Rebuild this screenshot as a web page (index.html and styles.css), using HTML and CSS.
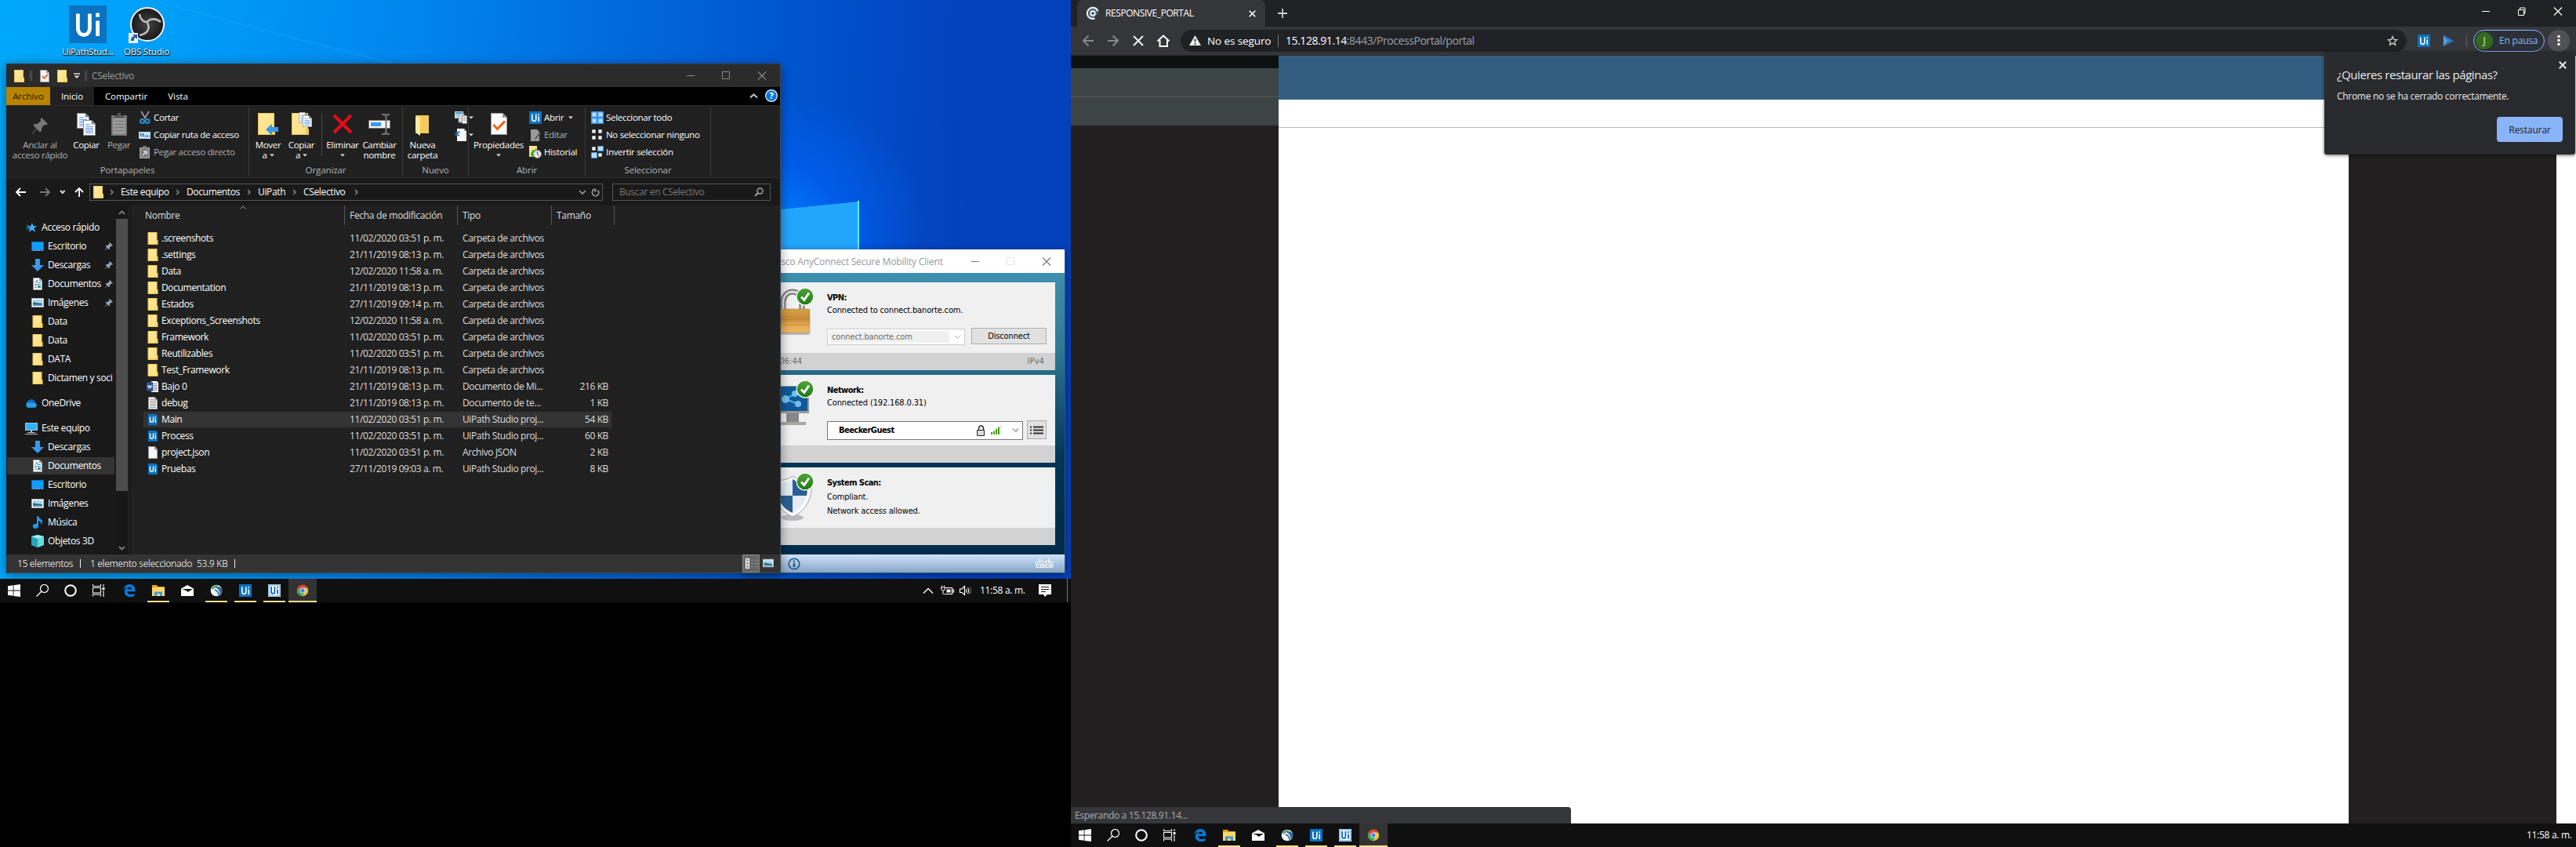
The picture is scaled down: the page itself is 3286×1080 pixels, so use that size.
FILE: index.html
```html
<!DOCTYPE html>
<html lang="es">
<head>
<meta charset="utf-8">
<title>Escritorio</title>
<link rel="stylesheet" href="styles.css">
</head>
<body>
<svg class="defs" width="0" height="0">
  <defs>
    <linearGradient id="gFolder" x1="0" y1="0" x2="1" y2="1"><stop offset="0" stop-color="#ffe9a2"/><stop offset="1" stop-color="#ffdf80"/></linearGradient>
    <linearGradient id="gGreen" x1="0" y1="0" x2="0" y2="1"><stop offset="0" stop-color="#4fa53a"/><stop offset="1" stop-color="#1d7a12"/></linearGradient>
    <linearGradient id="gGold" x1="0" y1="0" x2="0" y2="1"><stop offset="0" stop-color="#d9a04a"/><stop offset=".45" stop-color="#c98f3c"/><stop offset=".55" stop-color="#dba24c"/><stop offset="1" stop-color="#f2bb66"/></linearGradient>
    <radialGradient id="gObs"><stop offset="0" stop-color="#444"/><stop offset="1" stop-color="#1a181a"/></radialGradient>
    <symbol id="folder" viewBox="0 0 13 16"><path d="M0 0h12v10h1v6H0z" fill="#f0c84c"/><path d="M1 1h10v10h-1v4H1z" fill="url(#gFolder)"/><path d="M11 11h1v4h-1z" fill="#fff0b8"/></symbol>
    <symbol id="bigfolder" viewBox="0 0 22 28"><path d="M0 0h21v20h1v8H0z" fill="#efc653"/><path d="M1 1h19v19h-2v7H1z" fill="url(#gFolder)"/></symbol>
    <symbol id="page" viewBox="0 0 12 16"><path d="M0 0h8.5L12 3.500V16H0z" fill="#999"/><path d="M1 1h7v3.500h3V15H1z" fill="#f7f7f7"/></symbol>
    <symbol id="text" viewBox="0 0 12 16"><path d="M0 0h8.500L12 3.500V16H0z" fill="#999"/><path d="M1 1h7v3.500h3V15H1z" fill="#f7f7f7"/><path d="M2 3.500h5M2 5.500h8M2 7.500h8M2 9.500h8M2 11.500h8M2 13.500h8" stroke="#9a9a9a"/></symbol>
    <symbol id="doc" viewBox="0 0 12 16"><path d="M0 0h8.500L12 3.500V16H0z" fill="#999"/><path d="M1 1h7v3.500h3V15H1z" fill="#fff"/><path d="M3 7l2-4 1.500 4M7 6.500h3M2 8.500h8" stroke="#2a8fd8" fill="none"/><path d="M2 10.500h3M2 12.500h3" stroke="#888"/><path d="M6 10h4v3H6z" fill="#3b8f86"/></symbol>
    <symbol id="sheet" viewBox="0 0 16 20"><path d="M0 0h11l5 5v15H0z" fill="#8d8d8d"/><path d="M1 1h9.500v4.500H15V19H1z" fill="#fff"/><path d="M3 5.500h6M3 8.500h10M3 10.500h10M3 12.500h10M3 14.500h10M3 16.500h10" stroke="#5b9bf0"/></symbol>
    <symbol id="desk" viewBox="0 0 16 12"><path d="M0 0h16v12H0z" fill="#0a6cc8"/><path d="M1 1h14v9H1z" fill="#109df5"/><path d="M2 11h1M4 11h8M13 11h2" stroke="#fff" stroke-dasharray="1 1"/></symbol>
    <symbol id="down" viewBox="0 0 16 16"><path d="M5 0h6v8h5l-8 8-8-8h5z" fill="#3a97ea"/></symbol>
    <symbol id="img" viewBox="0 0 16 12"><path d="M0 0h16v12H0z" fill="#aaa"/><path d="M1 1h14v10H1z" fill="#fff"/><path d="M2 2h12v8H2z" fill="#a9d4f7"/><path d="M2 5l4 1 8 1v3H2z" fill="#2b6f78"/><path d="M2 8h12v2H2z" fill="#4b8fca"/></symbol>
    <symbol id="cloud" viewBox="0 0 16 11"><path d="M4 10a4 4 0 0 1-1-7 5.500 5.500 0 0 1 9-1l2 3-8 6z" fill="#0f6cc4"/><path d="M3 10.800a3.600 3.600 0 0 1 1-6.500l9 1a3 3 0 0 1 0 5.500z" fill="#28a0e8"/></symbol>
    <symbol id="pc" viewBox="0 0 16 15"><path d="M0 0h16v10H0z" fill="#8fc7e8"/><path d="M1 1h14v8H1z" fill="#38aef5"/><path d="M7 10h2v2h4v1H3v-1h4zM0 14h16v1H0z" fill="#b9c4cc"/></symbol>
    <symbol id="note" viewBox="0 0 12 16"><path d="M5 0h2c0 3 5 4 5 7 0 2-1 3-2 4 1-3-1-4-3-5v7a3.600 3.200 0 1 1-2-3z" fill="#1a9bf0"/></symbol>
    <symbol id="cube" viewBox="0 0 16 16"><path d="M8 0l8 2v11l-8 3-8-3V2z" fill="#2fb4c4"/><path d="M8 5l8-3v11l-8 3z" fill="#67d7e2"/><path d="M0 2l8-2 8 2-8 3z" fill="#a5edf2"/><path d="M0 2l8 3v11l-8-3z" fill="#27a5b8"/></symbol>
    <symbol id="star" viewBox="0 0 14 12"><path d="M8 0l1.400 4H14l-3.500 2.800L12 12 8 9l-4 3 1-4.500L1.500 4.500H6z" fill="#39aef5"/><path d="M0 6.500h4M1 8.500h3M1 3.500h3" stroke="#1a7dc8"/></symbol>
    <symbol id="pin" viewBox="0 0 10 10"><path d="M6 0l4 4-1 .8-1-.3L6 6.500 6 8.500l-1 .8-2-2L.5 10H0v-.5L2.500 7 .7 5l.8-1 2 0 2-2L5.200 1z" fill="#98a3ad"/></symbol>
    <symbol id="word" viewBox="0 0 16 14"><path d="M6 0h7l2 2v12H6z" fill="#fff"/><path d="M8 3.500h5M8 5.500h6M8 7.500h6M8 9.500h6M8 11.500h6" stroke="#888"/><path d="M0 2l8-1v12l-8-1z" fill="#2a5699"/><path d="M1.500 5l1.200 4L4 5.500 5.300 9l1.200-4" fill="none" stroke="#fff"/></symbol>
    <symbol id="ui" viewBox="0 0 16 16"><path d="M0 0h16v16H0z" fill="#0b72c0"/><path d="M3.800 3.500v6c0 4 5 4 5 0v-6M12.200 6.500v6.500" fill="none" stroke="#fff" stroke-width="1.600"/><path d="M11.400 3.200H13v1.700h-1.600z" fill="#fff"/></symbol>
    <symbol id="uiw" viewBox="0 0 16 16"><path d="M0 0h16v16H0z" fill="#fff"/><path d="M1 1h14v14H1z" fill="none" stroke="#0b72c0" stroke-width=".8"/><path d="M4 3v6.500c0 3.200 4.400 3.200 4.400 0V3M12 6.500v6" fill="none" stroke="#0b72c0" stroke-width="1.900"/><path d="M11 3h2v2h-2z" fill="#0b72c0"/></symbol>
    <symbol id="uifile" viewBox="0 0 12 14"><path d="M0 0h10l2 2v12H0z" fill="#0b72c0"/><path d="M2.500 3.500v4.500c0 3 4 3 4 0V3.500M9.300 6v5" fill="none" stroke="#fff" stroke-width="1.400"/><path d="M8.500 3.300h1.600v1.500H8.500z" fill="#fff"/></symbol>
    <symbol id="chevr" viewBox="0 0 5 8"><path d="M1 1l3 3-3 3" fill="none" stroke="#8a8a8a" stroke-width="1.500"/></symbol>
    <symbol id="dd" viewBox="0 0 6 4"><path d="M0 .5h6L3 3.500z" fill="#ddd"/></symbol>
    <symbol id="ok" viewBox="0 0 24 24"><circle cx="12" cy="12" r="11.500" fill="#fff"/><circle cx="12" cy="12" r="10.300" fill="url(#gGreen)"/><path d="M7 12.500l3.800 4L17 7.500" fill="none" stroke="#fff" stroke-width="3"/></symbol>
    <symbol id="win" viewBox="0 0 16 16"><path d="M0 2.300L6.700 1.300V7.600H0zM7.500 1.200L16 0V7.600H7.500zM0 8.400H6.700V14.800L0 13.800zM7.500 8.400H16V16L7.500 14.900z" fill="#fff"/></symbol>
    <symbol id="lens" viewBox="0 0 16 16"><circle cx="10.500" cy="5.500" r="5" fill="none" stroke="#fff" stroke-width="1.200"/><path d="M7 9L.5 15.500" stroke="#fff" stroke-width="1.200"/></symbol>
    <symbol id="ring" viewBox="0 0 16 16"><circle cx="8" cy="8" r="6.800" fill="none" stroke="#fff" stroke-width="2"/></symbol>
    <symbol id="tview" viewBox="0 0 16 16"><path d="M.5 0v2.500h10V0M.5 15.500V13h10v2.500M.5 4.500h10v6.500H.5zM14 0v3M14 8v8" fill="none" stroke="#fff" stroke-width="1.100"/><path d="M12.500 4h3v3h-3z" fill="#fff"/></symbol>
    <symbol id="edge" viewBox="0 0 16 16"><path d="M0 7C1 2.500 4.500 0 8.300 0 13 0 15.500 3.500 15.500 7.300V9.300H5.300c.2 4 5.500 4.700 9.200 2.400v3.200C9 17.500 1.800 16 1.800 9.800c0-3 1.500-5 4-6.300C3.500 3.500 1.500 4.800 0 7zM5.500 6.300h5.300c0-4-4.900-3.700-5.300 0z" fill="#0a78d7"/></symbol>
    <symbol id="fexp" viewBox="0 0 16 14"><path d="M0 0h6l1.500 2H16v12H0z" fill="#e9a400"/><path d="M0 3h16v11H0z" fill="#ffd869"/><path d="M3 14V8.500h10V14h-3v-3H6v3z" fill="#3a96dd"/></symbol>
    <symbol id="mail" viewBox="0 0 16 14"><path d="M8 0l8 4.500V14H0V4.500z" fill="#fff"/><path d="M1 5h14L8.500 9 7 7.200z" fill="#101010"/></symbol>
    <symbol id="any" viewBox="0 0 16 16"><circle cx="8" cy="8" r="7.300" fill="#eef3f5"/><path d="M1.500 5.500A7.300 7.300 0 0 1 12 2C8 2 5 4 4.500 7z" fill="#6fae7d"/><path d="M3 5c5-2.500 9 1 9.500 8.500A7.300 7.300 0 0 0 14.500 5C11 2 6 2 3 5z" fill="#2c6f9e"/><path d="M6 7c3 1 5 4 5.500 8" fill="none" stroke="#1d5a88" stroke-width="1.400"/></symbol>
    <symbol id="chrome" viewBox="0 0 16 16"><circle cx="8" cy="8" r="7.200" fill="#f2c42c"/><path d="M1.800 4.400A7.200 7.200 0 0 1 14.300 4.500H8L5 9.800z" fill="#e04436"/><path d="M1.800 4.400A7.200 7.200 0 0 0 7.400 15.200L11 9.800H5z" fill="#3aa757"/><circle cx="8" cy="8" r="3.500" fill="#fff"/><circle cx="8" cy="8" r="2.700" fill="#4285f4"/></symbol>
  </defs>
</svg>

<div class="screens">
<section class="left">
  <div class="desktop">
    <svg class="rays" width="1366" height="738"><path d="M190 0L500 81" stroke="#1fa6fb" stroke-width="2" opacity=".4"/><path d="M995 267l100-10v63H995z" fill="#22a6fb"/><path d="M1095 256v63" stroke="#5cecff" stroke-width="2"/></svg>
    <div class="shortcut s1"><svg width="48" height="48"><use href="#ui"/></svg><span>UiPathStud...</span></div>
    <div class="shortcut s2">
      <svg width="48" height="48" viewBox="0 0 48 48"><circle cx="25" cy="24" r="21" fill="url(#gObs)" stroke="#f2f2f2" stroke-width="2"/><g fill="none" stroke="#bcbcbc" stroke-width="2.600"><path d="M15 11c1 7 5 10 9 10"/><path d="M24 22c4-6 12-6 18-1"/><path d="M25 22c4 8 0 14-10 16"/></g><path d="M1 35h12v13H1z" fill="#f2f2f2"/><path d="M4 45c0-4 1-5 4-6l-2-2h6v6l-2-2c-2 0-2 2-2 4z" fill="#2a5ba8"/></svg>
      <span>OBS Studio</span></div>

    <div class="cisco">
      <div class="c-title"><span>Cisco AnyConnect Secure Mobility Client</span>
        <svg width="102" height="11"><path d="M0 5.500h10" stroke="#777"/><path d="M45.500.5h9v9h-9z" fill="none" stroke="#e2e2e2"/><path d="M91 .5l10 10M101 .5l-10 10" stroke="#777" stroke-width="1.100"/></svg></div>
      <div class="c-body">
        <div class="panel">
          <div class="p-main">
            <svg class="p-ico" width="62" height="72"><path d="M19 36V25a12 13 0 0 1 24 0v11" fill="none" stroke="#777" stroke-width="7"/><path d="M19 36V25a12 13 0 0 1 24 0v11" fill="none" stroke="#ddd" stroke-width="3"/><rect x="4" y="64" width="49" height="3" rx="1" fill="#bbb"/><rect x="3" y="34" width="50" height="30" rx="1" fill="url(#gGold)" stroke="#a9772c" stroke-width=".5"/><path d="M4 44h48M4 47h48M4 50h48M4 54h48" stroke="#b57e30" opacity=".6"/><use href="#ok" x="35" y="6" width="24" height="24"/></svg>
            <div class="p-info"><b>VPN:</b><span>Connected to connect.banorte.com.</span>
              <div class="ctl"><div class="combo off"><span>connect.banorte.com</span><svg width="9" height="6"><path d="M.5.5l4 4 4-4" fill="none" stroke="#aaa"/></svg></div><div class="btn">Disconnect</div></div></div>
          </div>
          <div class="p-foot"><span>00:06:44</span><span>IPv4</span></div>
        </div>
        <div class="panel">
          <div class="p-main">
            <svg class="p-ico" width="62" height="72"><path d="M0 13h52v36H0z" fill="#999"/><path d="M0 12h52v2H0z" fill="#eee"/><path d="M0 15h50v31H0z" fill="#10599a"/><path d="M34 24L22 31l16 6" fill="none" stroke="#5bb2e8" stroke-width="2"/><circle cx="22" cy="31" r="5" fill="#6fc0f0"/><circle cx="34" cy="24" r="4" fill="#6fc0f0"/><circle cx="38" cy="37" r="4" fill="#6fc0f0"/><path d="M23 49h16v11H23z" fill="#888"/><path d="M10 60h38v4H10z" fill="#a8a8a4"/><use href="#ok" x="35" y="6" width="24" height="24"/></svg>
            <div class="p-info"><b>Network:</b><span>Connected (192.168.0.31)</span>
              <div class="ctl net"><div class="combo on"><b>BeeckerGuest</b>
                <svg width="54" height="14"><path d="M2.500 6V4a3 3 0 0 1 6 0v2" fill="none" stroke="#333" stroke-width="1.500"/><path d="M.5 6.500h9v7h-9z" fill="#ddd" stroke="#222"/><path d="M18 12V9h2v3zM21 12V7.500h2V12zM24 12V5h2v7zM27 12V2.500h2V12z" fill="#4a9a12"/><path d="M30 12V0h1.500v12z" fill="#ddd"/><path d="M46 4.500l3.700 3.700 3.700-3.700" fill="none" stroke="#444"/></svg></div>
                <div class="btn list"><svg width="17" height="11"><path d="M0 1.500h2M0 5.500h2M0 9.500h2M4 1.500h13M4 5.500h13M4 9.500h13" stroke="#333" stroke-width="2"/></svg></div></div></div>
          </div>
          <div class="p-foot"></div>
        </div>
        <div class="panel last">
          <div class="p-main">
            <svg class="p-ico" width="62" height="72"><ellipse cx="31" cy="64" rx="14" ry="4" fill="#bbb"/><path d="M31 11q11 8 24 4c2 24-6 40-24 48C13 55 5 39 7 15q13 4 24-4z" fill="#fbfbfb" stroke="#9aa0a6"/><path d="M31 15q9 6 19 4c1 20-5 32-19 39z" fill="#e4ebf3"/><path d="M31 15q-9 6-19 4c0 7 0 12 1 17h18z" fill="#e4ebf3"/><path d="M31 15q9 6 19 4c0 7 0 12-1 17H31zM31 36v22c-11-5-16-12-18-22z" fill="#2b5f93"/><use href="#ok" x="35" y="6" width="24" height="24"/></svg>
            <div class="p-info wide"><b>System Scan:</b><span>Compliant.</span><span>Network access allowed.</span></div>
          </div>
          <div class="p-foot"></div>
        </div>
      </div>
      <div class="c-foot"><svg width="16" height="16"><circle cx="8" cy="8" r="6.800" fill="none" stroke="#1b5a85" stroke-width="1.600"/><path d="M8 7v5M8 3.800v2" stroke="#1b5a85" stroke-width="2.400"/></svg>
        <div class="logo"><svg width="24" height="7"><path d="M.7 4v2M3.500 3v3M6.300 0v6M9.100 2v4M12 4v2M14.800 2v4M17.600 0v6M20.400 3v3M23.300 4v2" stroke="#fff" stroke-width="1.300"/></svg><span>CISCO</span></div></div>
    </div>

    <div class="explorer">
      <div class="e-title">
        <svg width="13" height="16"><use href="#folder"/></svg><i class="vsep a"></i>
        <svg class="m1" width="12" height="16"><use href="#page"/><path d="M3 8l2.500 3L10 6" stroke="#e8591a" stroke-width="1.800" fill="none"/></svg>
        <svg class="m2" width="13" height="16"><use href="#folder"/></svg>
        <svg class="m3" width="8" height="8"><path d="M0 1h8" stroke="#ddd" stroke-width="1.500"/><path d="M.5 3.500h7L4 7z" fill="#ddd"/></svg><i class="vsep b"></i>
        <span>CSelectivo</span>
        <svg class="winbtns" width="102" height="11"><path d="M0 5.500h10M45.500.5h9v9h-9z" fill="none" stroke="#888"/><path d="M91 .5l10 10M101 .5l-10 10" stroke="#888" stroke-width="1.100"/></svg>
      </div>
      <div class="tabs"><span class="t file">Archivo</span><span class="t home">Inicio</span><span class="t share">Compartir</span><span class="t view">Vista</span>
        <svg class="help" width="36" height="16"><path d="M1 10.500l4.500-4 4.500 4" fill="none" stroke="#bbb" stroke-width="2.200"/><circle cx="28" cy="8" r="7.400" fill="#0b79d8" stroke="#e8f2fa" stroke-width="1.200"/><text x="28" y="12" text-anchor="middle" class="q">?</text></svg></div>
      <div class="ribbon">
        <div class="group g1">
          <div class="tools">
            <div class="big dim b1"><svg width="22" height="30" viewBox="0 0 22 30"><path d="M13 6l8 8-2 1.500-2-.5-4 4v4l-2 1.500-4-4L1 27l-.5-.5L6.500 20l-4-4L4 14h4l4-4-.5-2z" fill="#777"/></svg><span>Anclar al<br>acceso rápido</span></div>
            <div class="big b2"><svg width="24" height="30"><use href="#sheet" x="0" y="0" width="16" height="20"/><use href="#sheet" x="8" y="9" width="16" height="20"/></svg><span>Copiar</span></div>
            <div class="big dim b3"><svg width="20" height="30"><path d="M0 3h20v26H0z" fill="#777"/><path d="M2 7h16v20H2z" fill="#999"/><path d="M4 10.500h12M4 14.500h12M4 18.500h12M4 22.500h12" stroke="#777"/><path d="M4 6V3h4V0h4v3h4v3z" fill="#555"/></svg><span>Pegar</span></div>
            <div class="stack">
              <div><svg width="16" height="16"><path d="M3 0l5.500 9M13 0L7.500 9" stroke="#aaa" stroke-width="1.500"/><circle cx="4.500" cy="12.500" r="2.500" fill="none" stroke="#2a8dd0" stroke-width="2"/><circle cx="11" cy="12.500" r="2.500" fill="none" stroke="#2a8dd0" stroke-width="2"/></svg>Cortar</div>
              <div><svg width="16" height="16"><path d="M0 4h15v9H0z" fill="#b9e0fa"/><path d="M2 6l1.500 4M5 6l1.500 4M8 9.500h1.500M10.500 9.500H12M13 9.500h1" stroke="#123"/></svg>Copiar ruta de acceso</div>
              <div class="dim"><svg width="16" height="16"><path d="M1 2h13v14H1z" fill="#999"/><path d="M3 4h9v10H3z" fill="#777"/><path d="M5 0h5v3H5z" fill="#777"/><path d="M5 12l4-4M6 7h4v4" stroke="#ddd" fill="none" stroke-width="1.500"/></svg>Pegar acceso directo</div>
            </div>
          </div><div class="glabel">Portapapeles</div>
        </div>
        <div class="group g2">
          <div class="tools">
            <div class="big b4"><svg width="28" height="30"><use href="#bigfolder" x="1" y="0" width="22" height="28"/><path d="M11 21l8-7v4h8v6h-8v5z" fill="#3a97ea"/></svg><span>Mover<br>a<svg width="6" height="4"><use href="#dd"/></svg></span></div>
            <div class="big b5"><svg width="28" height="30"><use href="#bigfolder" x="1" y="0" width="22" height="28"/><use href="#sheet" x="10" y="-1" width="12" height="14"/><use href="#sheet" x="15" y="3" width="12" height="15"/></svg><span>Copiar<br>a<svg width="6" height="4"><use href="#dd"/></svg></span></div>
            <i class="inner"></i>
            <div class="big b6"><svg width="24" height="30"><path d="M1 3l22 22M23 3L1 25" stroke="#e60b17" stroke-width="4"/></svg><span>Eliminar<br><svg class="solo" width="6" height="4"><use href="#dd"/></svg></span></div>
            <div class="big b7"><svg width="28" height="30"><path d="M.5 9.500h27v10H.5z" fill="#f4f4f4" stroke="#777"/><path d="M3 12h13v5H3z" fill="#3a97ea"/><path d="M17 2h4l1.500 2L24 2h3M22.500 3v23M17 27h4l1.500-2 1.500 2h3" fill="none" stroke="#777" stroke-width="2"/></svg><span>Cambiar<br>nombre</span></div>
          </div><div class="glabel">Organizar</div>
        </div>
        <div class="group g3">
          <div class="tools">
            <div class="big b8"><svg width="20" height="30"><path d="M2 3h16v23H7z" fill="#f3cb5c"/><path d="M1 3l6 4v22l-6-4z" fill="#ffe9a2"/></svg><span>Nueva<br>carpeta</span></div>
            <div class="stack small"><div><svg width="24" height="16"><path d="M0 0h11v9H0z" fill="#b5d9ef"/><path d="M1 1h9v2H1z" fill="#4a9ed8"/><path d="M5 3h7v11H5z" fill="#ddd" stroke="#999"/><path d="M9.500 5.500h6v10h-6z" fill="#fff" stroke="#888"/><path d="M11 8h3M11 10h3M11 12h3" stroke="#888"/><use href="#dd" x="18" y="6" width="6" height="4"/></svg></div>
            <div><svg width="24" height="16"><path d="M3 0h9l3 3v13H3z" fill="#f6f6f6"/><path d="M12 0v3h3" fill="#999"/><path d="M2 4.500h5M0 6.500h5M1 8.500h5" stroke="#1f6fb5" stroke-width="1.300"/><use href="#dd" x="18" y="6" width="6" height="4"/></svg></div></div>
          </div><div class="glabel">Nuevo</div>
        </div>
        <div class="group g4">
          <div class="tools">
            <div class="big b9"><svg width="21" height="30"><path d="M0 0h15.500L21 5.500V28H0z" fill="#999"/><path d="M1 1h14v5h5v21H1z" fill="#fafafa"/><path d="M3.500 15l5 5.500L18 10.500" fill="none" stroke="#f06414" stroke-width="3"/></svg><span>Propiedades<br><svg class="solo" width="6" height="4"><use href="#dd"/></svg></span></div>
            <div class="stack">
              <div><svg width="16" height="16"><use href="#ui"/></svg>Abrir<svg class="ddr" width="6" height="4"><use href="#dd"/></svg></div>
              <div class="dim"><svg width="16" height="16"><path d="M2 1h8l3 3v12H2z" fill="#999"/><path d="M7 13l6-8 2 1-6 7-2 1z" fill="#555"/></svg>Editar</div>
              <div><svg width="16" height="16"><path d="M0 0h10v14H0z" fill="#ffe28c"/><path d="M2 10a6 6 0 0 1 6-5v-2l4 4-4 3V8q-3 1-2 7-4-1-4-5z" fill="#2fae3c"/><circle cx="10.500" cy="10.500" r="5" fill="#e8e8e8" stroke="#888"/><path d="M10.500 7v3.500l2.500 2" stroke="#444" fill="none"/></svg>Historial</div>
            </div>
          </div><div class="glabel">Abrir</div>
        </div>
        <div class="group g5">
          <div class="tools">
            <div class="stack">
              <div><svg width="16" height="16"><path d="M0 0h16v16H0z" fill="#3a97ea"/><path d="M1.500 1.500h5v5h-5zM9.500 1.500h5v5h-5zM1.500 9.500h5v5h-5zM9.500 9.500h5v5h-5z" fill="#b9dcf8"/></svg>Seleccionar todo</div>
              <div><svg width="16" height="16"><path d="M1.500 1.500h4v4h-4zM9.500 1.500h4v4h-4zM1.500 9.500h4v4h-4zM9.500 9.500h4v4h-4z" fill="#fff" stroke="#aaa"/></svg>No seleccionar ninguno</div>
              <div><svg width="16" height="16"><path d="M1.500 1.500h4v4h-4zM9.500 9.500h4v4h-4z" fill="#fff" stroke="#aaa"/><path d="M8.500.5h7v6h-7zM.5 8.500h7v7h-7z" fill="#b9dcf8" stroke="#3a97ea"/></svg>Invertir selección</div>
            </div>
          </div><div class="glabel">Seleccionar</div>
        </div>
      </div>
      <div class="addr">
        <svg width="88" height="14"><path d="M1 7h12M6 2L1 7l5 5" fill="none" stroke="#fff" stroke-width="1.800"/><path d="M43 7H31M38 2l5 5-5 5" fill="none" stroke="#777" stroke-width="1.800"/><path d="M57 5l2.800 3 2.800-3" fill="none" stroke="#ddd" stroke-width="2"/><path d="M81 13V2M76 7l5-5 5 5" fill="none" stroke="#fff" stroke-width="1.800"/></svg>
        <div class="path"><svg width="13" height="16"><use href="#folder"/></svg><svg class="c1" width="5" height="8"><use href="#chevr"/></svg><span class="w60">Este equipo</span><svg width="5" height="8"><use href="#chevr"/></svg><span class="w67">Documentos</span><svg width="5" height="8"><use href="#chevr"/></svg><span class="w34">UiPath</span><svg width="5" height="8"><use href="#chevr"/></svg><span class="w55">CSelectivo</span><svg width="5" height="8"><use href="#chevr"/></svg>
          <svg class="reload" width="27" height="14"><path d="M1 5l4 4 4-4" fill="none" stroke="#999" stroke-width="1.700"/><path d="M24.500 4.500a4.200 4.200 0 1 1-5-.5M18 3.500h3.500V7" fill="none" stroke="#999" stroke-width="1.600"/></svg></div>
        <div class="find"><span>Buscar en CSelectivo</span><svg width="12" height="12"><circle cx="7.500" cy="4.500" r="3.500" fill="none" stroke="#aaa" stroke-width="1.400"/><path d="M5 7L1 11" stroke="#aaa" stroke-width="1.800"/></svg></div>
      </div>
      <div class="e-body">
        <nav class="nav">
          <div class="n root"><svg width="16" height="12"><use href="#star"/></svg>Acceso rápido</div>
          <div class="n"><svg width="16" height="12"><use href="#desk"/></svg>Escritorio<svg class="pin" width="10" height="10"><use href="#pin"/></svg></div>
          <div class="n"><svg width="16" height="16"><use href="#down"/></svg>Descargas<svg class="pin" width="10" height="10"><use href="#pin"/></svg></div>
          <div class="n"><svg width="16" height="16"><use href="#doc"/></svg>Documentos<svg class="pin" width="10" height="10"><use href="#pin"/></svg></div>
          <div class="n"><svg width="16" height="12"><use href="#img"/></svg>Imágenes<svg class="pin" width="10" height="10"><use href="#pin"/></svg></div>
          <div class="n"><svg width="16" height="16"><use href="#folder"/></svg>Data</div>
          <div class="n"><svg width="16" height="16"><use href="#folder"/></svg>Data</div>
          <div class="n"><svg width="16" height="16"><use href="#folder"/></svg>DATA</div>
          <div class="n"><svg width="16" height="16"><use href="#folder"/></svg>Dictamen y soci</div>
          <div class="n root gap"><svg width="16" height="11"><use href="#cloud"/></svg>OneDrive</div>
          <div class="n root gap"><svg width="16" height="15"><use href="#pc"/></svg>Este equipo</div>
          <div class="n"><svg width="16" height="16"><use href="#down"/></svg>Descargas</div>
          <div class="n sel"><svg width="16" height="16"><use href="#doc"/></svg>Documentos</div>
          <div class="n"><svg width="16" height="12"><use href="#desk"/></svg>Escritorio</div>
          <div class="n"><svg width="16" height="12"><use href="#img"/></svg>Imágenes</div>
          <div class="n"><svg width="16" height="16"><use href="#note"/></svg>Música</div>
          <div class="n"><svg width="16" height="16"><use href="#cube"/></svg>Objetos 3D</div>
        </nav>
        <div class="scroll"><svg width="9" height="6"><path d="M1 5l3.500-3.500L8 5" fill="none" stroke="#777" stroke-width="2"/></svg><i></i><svg width="9" height="6"><path d="M1 1l3.500 3.500L8 1" fill="none" stroke="#777" stroke-width="2"/></svg></div>
        <div class="files">
          <div class="head"><span>Nombre</span><span>Fecha de modificación</span><span>Tipo</span><span>Tamaño</span><svg class="sort" width="8" height="5"><path d="M.5 4.500L4 1l3.500 3.500" fill="none" stroke="#999"/></svg></div>
          <div class="row"><svg width="16" height="16"><use href="#folder"/></svg><span>.screenshots</span><span>11/02/2020 03:51 p. m.</span><span>Carpeta de archivos</span><span></span></div>
          <div class="row"><svg width="16" height="16"><use href="#folder"/></svg><span>.settings</span><span>21/11/2019 08:13 p. m.</span><span>Carpeta de archivos</span><span></span></div>
          <div class="row"><svg width="16" height="16"><use href="#folder"/></svg><span>Data</span><span>12/02/2020 11:58 a. m.</span><span>Carpeta de archivos</span><span></span></div>
          <div class="row"><svg width="16" height="16"><use href="#folder"/></svg><span>Documentation</span><span>21/11/2019 08:13 p. m.</span><span>Carpeta de archivos</span><span></span></div>
          <div class="row"><svg width="16" height="16"><use href="#folder"/></svg><span>Estados</span><span>27/11/2019 09:14 p. m.</span><span>Carpeta de archivos</span><span></span></div>
          <div class="row"><svg width="16" height="16"><use href="#folder"/></svg><span>Exceptions_Screenshots</span><span>12/02/2020 11:58 a. m.</span><span>Carpeta de archivos</span><span></span></div>
          <div class="row"><svg width="16" height="16"><use href="#folder"/></svg><span>Framework</span><span>11/02/2020 03:51 p. m.</span><span>Carpeta de archivos</span><span></span></div>
          <div class="row"><svg width="16" height="16"><use href="#folder"/></svg><span>Reutilizables</span><span>11/02/2020 03:51 p. m.</span><span>Carpeta de archivos</span><span></span></div>
          <div class="row"><svg width="16" height="16"><use href="#folder"/></svg><span>Test_Framework</span><span>21/11/2019 08:13 p. m.</span><span>Carpeta de archivos</span><span></span></div>
          <div class="row"><svg width="16" height="14"><use href="#word"/></svg><span>Bajo 0</span><span>21/11/2019 08:13 p. m.</span><span>Documento de Mi...</span><span>216 KB</span></div>
          <div class="row"><svg width="16" height="16"><use href="#text"/></svg><span>debug</span><span>21/11/2019 08:13 p. m.</span><span>Documento de te...</span><span>1 KB</span></div>
          <div class="row on"><svg width="16" height="14"><use href="#uifile"/></svg><span>Main</span><span>11/02/2020 03:51 p. m.</span><span>UiPath Studio proj...</span><span>54 KB</span></div>
          <div class="row"><svg width="16" height="14"><use href="#uifile"/></svg><span>Process</span><span>11/02/2020 03:51 p. m.</span><span>UiPath Studio proj...</span><span>60 KB</span></div>
          <div class="row"><svg width="16" height="16"><use href="#page"/></svg><span>project.json</span><span>11/02/2020 03:51 p. m.</span><span>Archivo JSON</span><span>2 KB</span></div>
          <div class="row"><svg width="16" height="14"><use href="#uifile"/></svg><span>Pruebas</span><span>27/11/2019 09:03 a. m.</span><span>UiPath Studio proj...</span><span>8 KB</span></div>
        </div>
      </div>
      <div class="e-status"><span class="st1">15 elementos</span><i></i><span class="st2">1 elemento seleccionado</span><span class="st3">53.9 KB</span><i></i>
        <svg class="views" width="41" height="23"><path d="M.5.5h21v22H.5z" fill="#666" stroke="#888"/><path d="M4 5h5v13H4z" fill="#fff"/><path d="M5 6h3v3H5zM5 10h3v3H5zM5 14h3v3H5z" fill="#999"/><path d="M11 7.500h3M16 7.500h4M11 11.500h3M16 11.500h4M11 15.500h3M16 15.500h4" stroke="#888"/><use href="#img" x="26" y="5" width="14" height="12"/></svg></div>
    </div>
  </div>
  <div class="taskbar">
    <span><svg width="16" height="16"><use href="#win"/></svg></span><span><svg width="16" height="16"><use href="#lens"/></svg></span><span><svg width="16" height="16"><use href="#ring"/></svg></span><span><svg width="16" height="16"><use href="#tview"/></svg></span>
    <span><svg width="16" height="16"><use href="#edge"/></svg></span><span class="run"><svg width="16" height="14"><use href="#fexp"/></svg></span><span><svg width="16" height="14"><use href="#mail"/></svg></span><span class="run"><svg width="16" height="16"><use href="#any"/></svg></span><span class="run"><svg width="16" height="16"><use href="#ui"/></svg></span><span class="run"><svg width="16" height="16"><use href="#uiw"/></svg></span><span class="run act"><svg width="16" height="16"><use href="#chrome"/></svg></span>
    <div class="tray">
      <svg width="62" height="14"><path d="M0 10.500l6-6 6 6" fill="none" stroke="#fff" stroke-width="1.300"/><path d="M28 3.500h8.500v8H26.500M37 6h1.500v3H37" fill="none" stroke="#fff" stroke-width="1.200"/><path d="M29.500 5.500h5v4h-5z" fill="#fff"/><path d="M23.500.5v2M26.500.5v2M25 7.500v4.500" stroke="#fff"/><path d="M22.500 3h5v2L26 7h-2l-1.500-2z" fill="#101010" stroke="#fff"/><path d="M46.500 5h2.500l3.500-3.500v11L49 9.500h-2.500z" fill="none" stroke="#fff" stroke-width="1.200"/><path d="M54.500 5q1.500 2 0 4.500M56.500 3.500q2.500 3.500 0 7.500" fill="none" stroke="#fff" stroke-width="1.200"/><path d="M59 2q3 5 0 10" fill="none" stroke="#666" stroke-width="1.200"/></svg>
      <span>11:58 a. m.</span>
      <svg class="act-c" width="16" height="16"><path d="M0 0h16v13h-5l-3 3-2-3H0z" fill="#fff"/><path d="M3 3.500h10M3 6.500h10M3 9.500h6" stroke="#101010"/></svg><i></i>
    </div>
  </div>
</section>

<section class="right">
  <div class="strip">
    <div class="tab"><svg width="16" height="16"><path d="M10.500 14.400a7 7 0 1 1 4.300-5.500" fill="none" stroke="#eef2f6" stroke-width="2.200" stroke-dasharray="33 3"/><circle cx="8" cy="8" r="4" fill="none" stroke="#5f8fbe" stroke-width="2"/><circle cx="8" cy="8" r="2.600" fill="none" stroke="#fff" stroke-width="1.600"/></svg><span>RESPONSIVE_PORTAL</span><svg class="x" width="9" height="9"><path d="M.7.7l7.600 7.600M8.300.7L.7 8.300" stroke="#fff" stroke-width="1.600"/></svg></div>
    <svg class="plus" width="12" height="12"><path d="M6 0v12M0 6h12" stroke="#c8cacd" stroke-width="1.800"/></svg>
    <svg class="cwin" width="103" height="11"><path d="M0 5.500h10M46.500 3.500h7v7h-7zM48.500 3.500v-2.500h6.500v7h-1.500" fill="none" stroke="#fff"/><path d="M92 .5l10 10M102 .5l-10 10" stroke="#fff" stroke-width="1.200"/></svg>
  </div>
  <div class="bar">
    <svg class="navs" width="112" height="16"><path d="M14 8H1.500M7.500 1.500L1 8l6.500 6.500" fill="none" stroke="#85878a" stroke-width="2"/><path d="M32 8h12.500M38.500 1.500L45 8l-6.500 6.500" fill="none" stroke="#85878a" stroke-width="2"/><path d="M65 2l12 12M77 2L65 14" stroke="#eee" stroke-width="2"/><path d="M95.500 8.500L103 1.500l7.500 7M98.500 7v8h9.500V7" fill="none" stroke="#fff" stroke-width="2"/></svg>
    <div class="omni"><svg width="15" height="14"><path d="M7.500 0L15 13H0z" fill="#eee"/><path d="M7.500 4.500v4M7.500 10v2" stroke="#202124" stroke-width="1.600"/></svg><span class="ns">No es seguro</span><i></i><span class="url"><b>15.128.91.14</b>:8443/ProcessPortal/portal</span>
      <svg class="fav" width="14" height="14" viewBox="0 0 14 14"><path d="M7 1.500l1.600 3.800 4.100.3-3.100 2.700 1 4L7 10.100l-3.600 2.200 1-4L1.300 5.600l4.100-.3z" fill="none" stroke="#ccc" stroke-width="1.300"/></svg></div>
    <svg class="ext1" width="16" height="16"><use href="#ui"/></svg>
    <svg class="ext2" width="13" height="14"><path d="M0 0l13 7-13 7z" fill="#2c78c4"/><path d="M0 0l5 7-5 7z" fill="#5aa0dc"/></svg><i class="bsep"></i>
    <div class="pill"><em>J</em><span>En pausa</span></div>
    <div class="menu"><svg width="4" height="14"><path d="M.5 0h3v3h-3zM.5 5h3v3h-3zM.5 10h3v3h-3z" fill="#fff"/></svg></div>
  </div>
  <main class="page">
    <aside><i class="a1"></i><i class="a2"></i><i class="a3"></i></aside>
    <div class="content"><i class="h1"></i><i class="h2"></i></div>
    <div class="dark"></div><div class="edge"></div>
    <div class="wait">Esperando a 15.128.91.14...</div>
  </main>
  <div class="popup">
    <svg class="px" width="10" height="10"><path d="M.8.8l8.400 8.400M9.200.8L.8 9.200" stroke="#e8e8e8" stroke-width="2"/></svg>
    <h2>¿Quieres restaurar las páginas?</h2><p>Chrome no se ha cerrado correctamente.</p><button>Restaurar</button>
  </div>
  <div class="taskbar">
    <span><svg width="16" height="16"><use href="#win"/></svg></span><span><svg width="16" height="16"><use href="#lens"/></svg></span><span><svg width="16" height="16"><use href="#ring"/></svg></span><span><svg width="16" height="16"><use href="#tview"/></svg></span>
    <span><svg width="16" height="16"><use href="#edge"/></svg></span><span class="run"><svg width="16" height="14"><use href="#fexp"/></svg></span><span><svg width="16" height="14"><use href="#mail"/></svg></span><span class="run"><svg width="16" height="16"><use href="#any"/></svg></span><span class="run"><svg width="16" height="16"><use href="#ui"/></svg></span><span class="run"><svg width="16" height="16"><use href="#uiw"/></svg></span><span class="run act"><svg width="16" height="16"><use href="#chrome"/></svg></span>
    <div class="tray clock"><span>11:58 a. m.</span></div>
  </div>
</section>
</div>
</body>
</html>
```
FILE: styles.css
```css
* { box-sizing: border-box; }
body { margin: 0; background: #000; font: 11.5px/16px "Open Sans", "Noto Sans", sans-serif; letter-spacing: -.2px; color: #fff; overflow: hidden; }
svg { display: block; flex: none; overflow: visible; }
span { white-space: nowrap; }
i { display: block; flex: none; font-style: normal; }
.defs { position: absolute; }
.screens { display: flex; width: 3286px; height: 1080px; }
.left { width: 1366px; flex: none; display: flex; flex-direction: column; }
.right { width: 1920px; flex: none; display: flex; flex-direction: column; position: relative; }

/* wallpaper */
.desktop { position: relative; height: 738px; overflow: hidden;
  background: radial-gradient(ellipse 190px 170px at 990px 290px, rgba(0,130,255,.9) 0, rgba(0,100,250,.6) 45%, rgba(0,80,220,0) 100%),
  linear-gradient(92deg, #00a8fa 0, #009ff8 15%, #0085ee 38%, #0068dc 58%, #0050cc 76%, #0540bb 90%, #0540bb 100%); }
.rays { position: absolute; left: 0; top: 0; }
.shortcut { position: absolute; top: 7px; width: 76px; display: flex; flex-direction: column; align-items: center; gap: 3px; text-shadow: 1px 1px 2px #000, 0 1px 1px #000; }
.s1 { left: 74px; letter-spacing: -.3px; } .s2 { left: 149px; }

/* file explorer */
.explorer { position: absolute; left: 8px; top: 81px; width: 988px; height: 650px; border: 1px solid #3d4a55; border-width: 0 1px 1px 0; background: #202020; box-shadow: 0 2px 12px rgba(0,0,0,.45); display: flex; flex-direction: column; }
.e-title { height: 30px; background: #2b2b2b; border-top: 1px solid #3a3a3a; display: flex; align-items: center; padding-left: 10px; color: #9a9a9a; font-size: 12px; letter-spacing: -.3px; }
.vsep { width: 3px; height: 13px; border: 1px solid #5a5a5a; border-width: 0 1px; }
.vsep.a { margin: 0 10px 0 7px; } .vsep.b { margin: 0 6px 0 6px; }
.m2 { margin-left: 10px; } .m3 { margin-left: 8px; }
.winbtns { margin-left: auto; margin-right: 17px; }
.tabs { height: 24px; background: #000; display: flex; align-items: stretch; line-height: 24px; border-bottom: 1px solid #2d2d2d; }
.tabs .t { text-align: center; letter-spacing: -.05px; }
.file { width: 56px; background: #b88400; color: #221a00; }
.home { width: 56px; background: #202020; }
.share { width: 82px; } .view { width: 50px; }
.help { margin: 3px 3px 0 auto; }
.q { font: bold 11px "Open Sans", sans-serif; fill: #fff; }
.ribbon { height: 92px; display: flex; border-bottom: 1px solid #2c2c2c; letter-spacing: -.3px; }
.group { height: 88px; margin-top: 2px; display: flex; flex-direction: column; border-right: 1px solid #3c3c3c; }
.g1 { width: 310px; } .g2 { width: 196px; } .g3 { width: 84px; } .g4 { width: 149px; } .g5 { width: 160px; }
.tools { height: 72px; display: flex; align-items: flex-start; }
.glabel { text-align: center; color: #b4b4b4; line-height: 16px; letter-spacing: -.1px; }
.big { text-align: center; display: flex; flex-direction: column; align-items: center; gap: 3px; line-height: 13px; padding-top: 7px; flex: none; }
.big span { padding-top: 1px; }
.big span svg { display: inline-block; margin-left: 3px; vertical-align: 2px; }
.big span svg.solo { margin-left: 0; }
.dim { color: #b0b0b0; }
.b1 { width: 86px; } .b2 { width: 32px; } .b3 { width: 51px; } .b4 { width: 48px; } .b5 { width: 37px; }
.b6 { width: 52px; } .b7 { width: 42px; } .b8 { width: 50px; } .b9 { width: 76px; }
.inner { width: 1px; height: 55px; background: #4a4a4a; margin: 7px 0 0 7px; }
.stack { display: flex; flex-direction: column; padding-top: 2px; }
.stack div { height: 22px; display: flex; align-items: center; gap: 3px; white-space: nowrap; }
.ddr { margin-left: 3px; }
.g3 .stack { padding-left: 16px; } .g4 .stack { padding-left: 1px; } .g5 .stack { padding-left: 7px; }
.g1 .stack { letter-spacing: -.35px; }
.addr { height: 35px; background: #191919; display: flex; align-items: center; padding-left: 12px; font-size: 12px; letter-spacing: -.35px; }
.path { width: 655px; height: 22px; border: 1px solid #555; margin-left: 6px; display: flex; align-items: center; padding-left: 4px; }
.path .c1 { margin-left: 8px; }
.path span { margin: 0 10px 0 9px; }
.w60 { width: 60px; } .w67 { width: 67px; } .w34 { width: 34px; } .w55 { width: 55px; }
.reload { margin: 0 3px 0 auto; }
.find { width: 202px; height: 22px; border: 1px solid #555; margin-left: 12px; display: flex; align-items: center; justify-content: space-between; padding: 0 8px; color: #777; }
.e-body { height: 445px; display: flex; }
.nav { width: 140px; background: #191919; padding-top: 16px; overflow: hidden; }
.n { height: 24px; display: flex; align-items: center; gap: 5px; padding-left: 32px; white-space: nowrap; position: relative; font-size: 12px; letter-spacing: -.35px; }
.n.root { padding-left: 24px; }
.n.gap { margin-top: 8px; }
.n.sel { background: #333; height: 22px; margin: 1px 2px 1px 1px; padding-left: 31px; }
.pin { position: absolute; right: 4px; top: 7px; }
.scroll { width: 15px; background: #171717; display: flex; flex-direction: column; align-items: center; padding-top: 6px; }
.scroll i { width: 15px; height: 347px; background: #4d4d4d; margin: 5px 0 70px; }
.files { flex: 1; border-left: 2px solid #191919; margin-left: 2px; position: relative; font-size: 12px; letter-spacing: -.38px; }
.head { height: 25px; margin-bottom: 7px; display: flex; color: #dedede; line-height: 26px; letter-spacing: -.3px; }
.head span { border-right: 1px solid #555; width: 144px; padding-left: 6px; }
.head span:first-child { width: 273px; padding-left: 18px; }
.head span:nth-child(3) { width: 120px; } .head span:nth-child(4) { width: 80px; }
.sort { position: absolute; left: 139px; top: 0; }
.row { height: 20px; margin: 0 0 1px 16px; width: 597px; display: grid; grid-template-columns: 23px 240px 144px 120px 66px; align-items: center; color: #dedede; }
.row svg { margin-left: 4px; }
.row span:nth-child(2) { color: #fff; }
.row span:last-child { text-align: right; }
.row.on { background: #333; }
.e-status { height: 23px; background: #333; display: flex; align-items: center; padding-left: 14px; color: #d6d6d6; font-size: 12px; letter-spacing: -.38px; }
.e-status i { width: 1px; height: 11px; background: #eee; }
.st1 { width: 80px; } .st2 { width: 136px; margin-left: 12px; } .st3 { width: 48px; }
.views { margin: 0 7px 0 auto; }

/* VPN client */
.cisco { position: absolute; left: 948px; top: 318px; width: 411px; height: 413px; border: 1px solid #33526e; border-width: 0 1px 1px 0; display: flex; flex-direction: column; font: 11px/16px "DejaVu Sans Condensed", "DejaVu Sans", sans-serif; letter-spacing: -.15px; color: #000; box-shadow: 0 2px 10px rgba(0,0,0,.4); }
.c-title { height: 30px; background: #fff; color: #999; display: flex; align-items: center; justify-content: space-between; padding: 0 17px 0 38px; font: 12px "Open Sans", sans-serif; letter-spacing: -.18px; }
.c-body { height: 359px; padding: 12px 12px 0 10px; display: flex; flex-direction: column; gap: 6px; background: linear-gradient(to bottom, #3f8fb0 0, #2d7896 28%, #155273 48%, #023556 66%, #012b4a 100%); }
.panel { height: 112px; background: #f0f0f0; display: flex; flex-direction: column; }
.panel.last { height: 99px; }
.p-main { height: 90px; display: flex; }
.last .p-main { height: 77px; }
.p-ico { margin-left: 22px; }
.p-info { margin-left: 13px; padding-top: 12px; display: flex; flex-direction: column; }
.p-info.wide { gap: 2px; }
.p-info b { letter-spacing: -.55px; }
.ctl { display: flex; gap: 8px; margin-top: 14px; }
.ctl.net { gap: 5px; }
.combo { background: #fff; display: flex; align-items: center; justify-content: space-between; }
.combo.off { width: 176px; height: 21px; margin-top: 1px; border: 1px solid #ccc; padding: 0 4px 0 2px; color: #6d6d6d; }
.combo.off span { background: #f0f0f0; width: 153px; line-height: 15px; padding-left: 3px; }
.combo.on { width: 250px; height: 24px; margin-top: 1px; border: 1px solid #777; padding: 0 4px 0 14px; }
.btn { width: 96px; height: 21px; background: #e1e1e1; border: 1px solid #adadad; text-align: center; line-height: 20px; }
.btn.list { width: 25px; height: 24px; display: grid; place-items: center; }
.p-foot { height: 22px; background: #d2d2d2; display: flex; justify-content: space-between; align-items: center; color: #6d6d6d; padding: 0 14px 0 20px; letter-spacing: .1px; }
.c-foot { height: 23px; background: linear-gradient(#cfe2fb, #87a5c6); display: flex; align-items: center; justify-content: space-between; padding: 0 14px 0 57px; }
.logo { display: flex; flex-direction: column; align-items: center; color: #fff; font: bold 7px/7px "DejaVu Sans", sans-serif; letter-spacing: -.3px; }

/* taskbars */
.taskbar { height: 30px; background: #101010; display: flex; flex: none; }
.taskbar > span { width: 37px; display: grid; place-items: center; position: relative; }
.taskbar > span:nth-child(-n+4) { width: 36px; }
.taskbar > span:nth-child(4) { margin-right: 2px; }
.run::after { content: ""; position: absolute; left: 5px; bottom: 0; width: 28px; height: 2px; background: #ffe08c; }
.taskbar > .act { width: 36px; background: #333; }
.run.act::after { left: 0; width: 36px; }
.tray { margin-left: auto; display: flex; align-items: center; font-size: 12px; letter-spacing: -.3px; }
.tray span { width: 57px; margin-left: 10px; }
.act-c { margin-left: 18px; }
.tray i { width: 1px; height: 30px; background: #777; margin: 0 4px 0 20px; }
.tray.clock { padding-right: 6px; }

/* browser */
.strip { height: 34px; background: #202124; display: flex; align-items: center; padding-left: 8px; flex: none; }
.tab { width: 240px; height: 34px; background: #35363a; border-radius: 7px 7px 0 0; display: flex; align-items: center; padding: 0 12px; font-size: 12px; letter-spacing: -.42px; }
.tab span { margin-left: 8px; }
.tab .x { margin-left: auto; }
.plus { margin-left: 16px; }
.cwin { margin: -5px 17px 0 auto; }
.bar { height: 37px; background: #35363a; border-bottom: 1px solid #282828; display: flex; align-items: center; flex: none; padding-left: 15px; }
.omni { width: 1564px; height: 28px; border-radius: 14px; background: #202124; margin-left: 13px; display: flex; align-items: center; padding: 0 11px; font-size: 14px; letter-spacing: -.44px; }
.ns { margin-left: 8px; width: 83px; font-size: 13.5px; letter-spacing: -.1px; }
.omni i { width: 1px; height: 16px; background: #777; margin: 0 9px 0 7px; }
.url { color: #9aa0a6; } .url b { color: #fff; font-weight: 400; }
.fav { margin-left: auto; }
.ext1 { margin-left: 14px; } .ext2 { margin-left: 17px; }
.bsep { width: 1px; height: 16px; background: #606266; margin: 0 8px 0 16px; }
.pill { width: 91px; height: 28px; border: 1px solid #8ab4f8; border-radius: 14px; background: #2b3038; color: #8ab4f8; display: flex; align-items: center; padding-left: 2px; gap: 8px; font-size: 12px; }
.pill em { width: 22px; height: 22px; border-radius: 50%; background: #33691e; color: #dfe8da; font-style: normal; text-align: center; line-height: 22px; }
.menu { width: 28px; height: 28px; border-radius: 50%; background: #505155; margin-left: 4px; display: grid; place-items: center; }
.page { height: 979px; display: flex; background: #fff; position: relative; }
aside { width: 265px; background: #231f20; display: flex; flex-direction: column; }
.a1 { height: 16px; background: #0d1111; } .a2 { height: 37px; background: #3d4444; border-bottom: 1px solid #545a5a; } .a3 { height: 36px; background: #3d4444; }
.content { width: 1365px; background: #fff; }
.h1 { height: 56px; background: #325d80; } .h2 { height: 36px; border-bottom: 1px solid #b8b8b8; }
.dark { width: 265px; background: #231f20; }
.edge { width: 25px; background: #fff; }
.wait { position: absolute; left: 0; bottom: 0; width: 638px; height: 21px; border-radius: 0 4px 0 0; background: #35363a; color: #a8aaad; font-size: 12px; line-height: 21px; padding-left: 5px; letter-spacing: -.35px; }
.popup { position: absolute; left: 1599px; top: 66px; width: 320px; height: 131px; background: #292a2d; border-radius: 3px; box-shadow: 0 1px 4px rgba(0,0,0,.6); padding: 19px 16px; display: flex; flex-direction: column; color: #e8eaed; }
.popup .px { position: absolute; right: 11px; top: 12px; }
.popup h2 { margin: 0; font-size: 15px; line-height: 20px; font-weight: 400; letter-spacing: -.43px; }
.popup p { margin: 9px 0 0; font-size: 12px; line-height: 18px; letter-spacing: -.3px; }
.popup button { align-self: flex-end; margin: 17px 0 0; width: 84px; height: 32px; border: 0; border-radius: 4px; background: #8ab4f8; color: #202124; font: 12px "Open Sans", sans-serif; letter-spacing: -.1px; padding: 0; flex: none; }
```
